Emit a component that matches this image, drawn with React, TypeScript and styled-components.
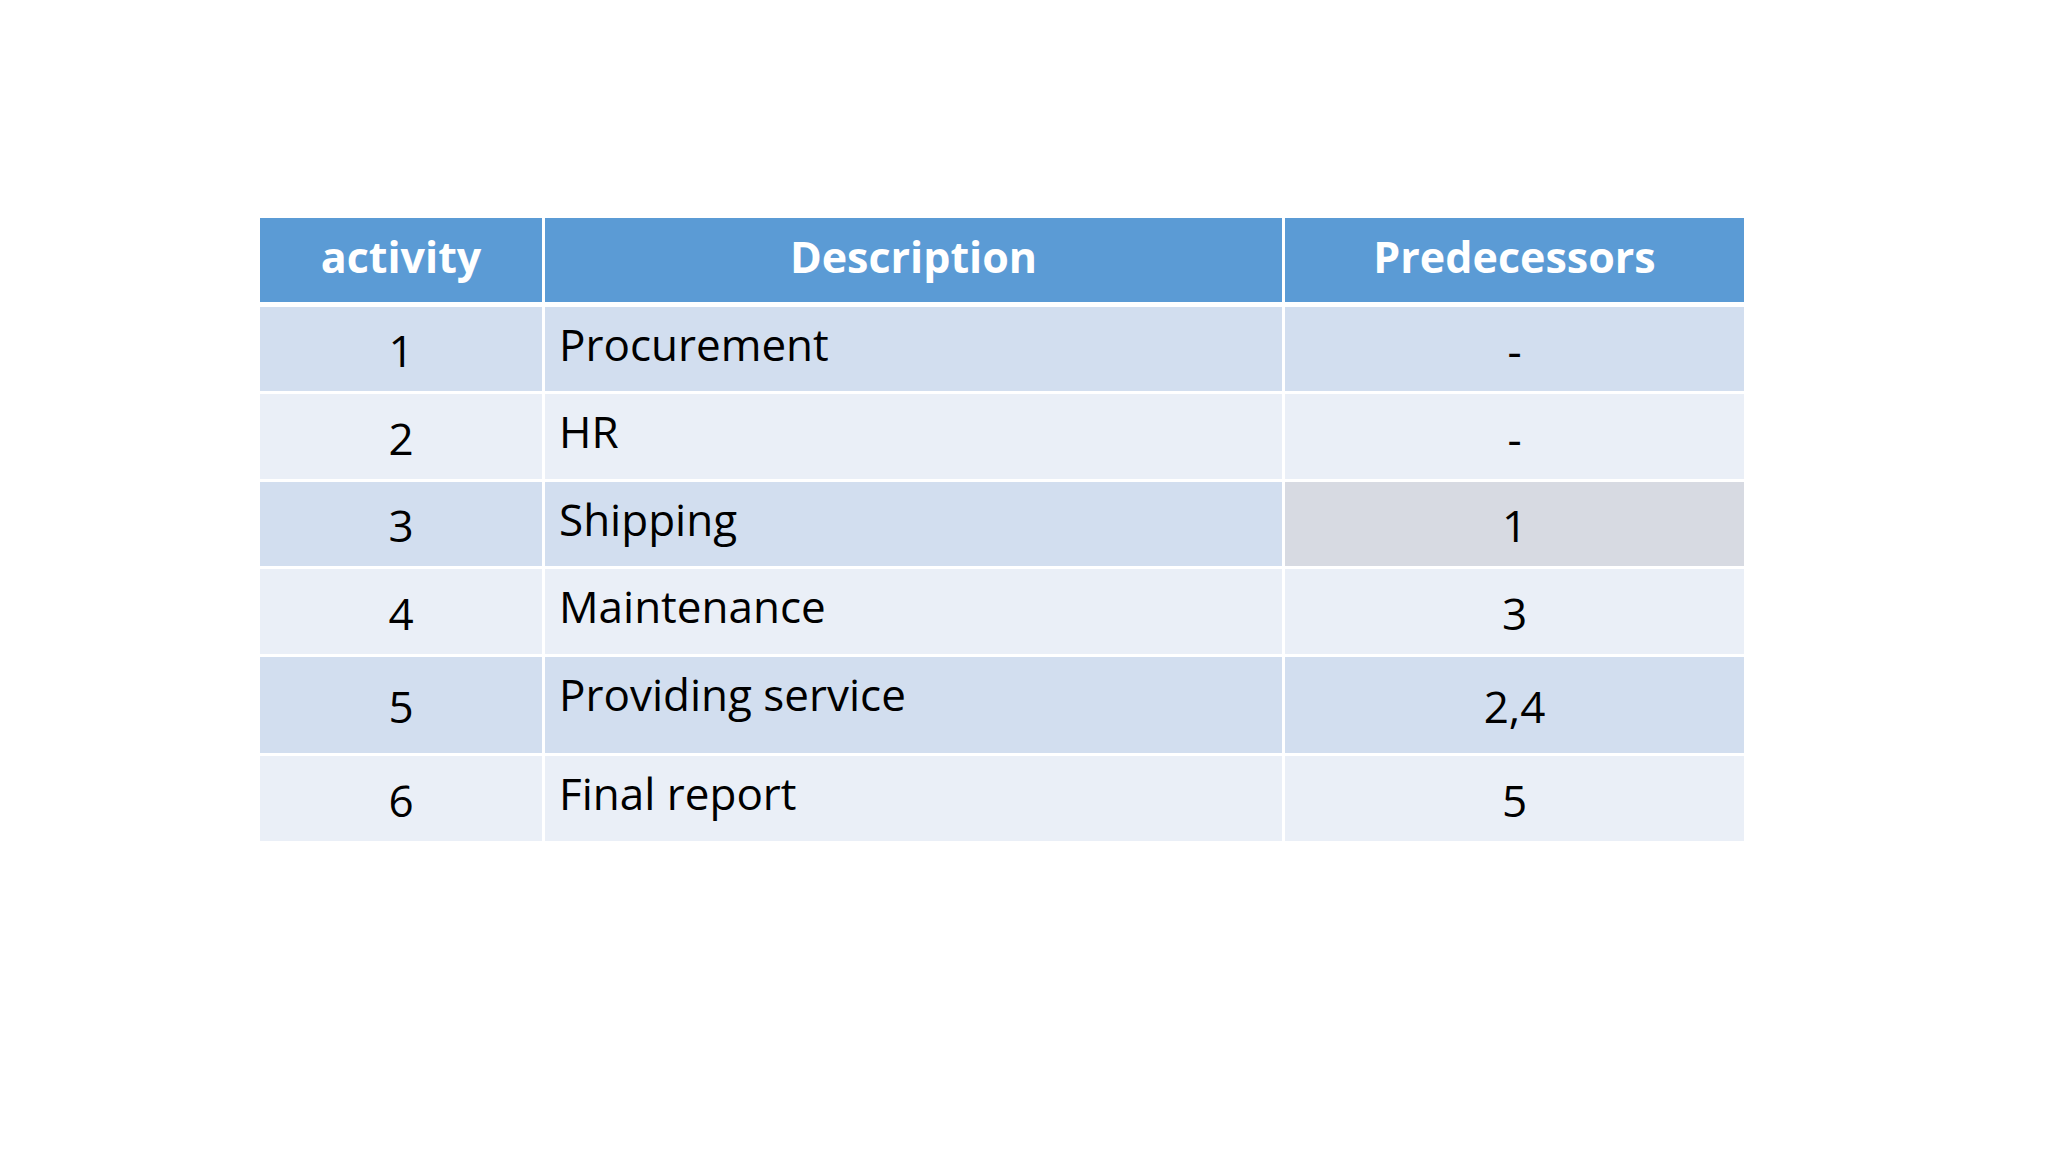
import styled, { createGlobalStyle } from "styled-components";

const GlobalStyle = createGlobalStyle`
  html, body {
    margin: 0;
    padding: 0;
    background: #ffffff;
  }
  body {
    font-family: "Open Sans", "Liberation Sans", sans-serif;
  }
`;

const Page = styled.main`
  width: 2048px;
  height: 1152px;
  box-sizing: border-box;
  padding: 218px 0 0 260px;
  background: #ffffff;
`;

const Table = styled.div`
  display: flex;
  flex-direction: column;
  gap: 3px;
  width: 1484px;
`;

const Row = styled.div<{ $height?: number }>`
  display: grid;
  grid-template-columns: 282px 737px 459px;
  column-gap: 3px;
  height: ${(p) => p.$height ?? 84}px;
`;

const HeaderRow = styled(Row)`
  margin-bottom: 2px;
`;

const HeadCell = styled.div`
  display: flex;
  align-items: center;
  justify-content: center;
  background: #5b9bd5;
  color: #ffffff;
  font-weight: 700;
  font-size: 43px;
  line-height: 60px;
  padding-bottom: 6px;
  box-sizing: border-box;
`;

const Cell = styled.div<{ $shade: "dark" | "light" | "grey" }>`
  display: flex;
  box-sizing: border-box;
  background: ${(p) =>
    p.$shade === "dark" ? "#d2deef" : p.$shade === "grey" ? "#d7dae2" : "#eaeff7"};
  color: #000000;
  font-size: 44px;
  line-height: 60px;
`;

const NumCell = styled(Cell)`
  align-items: center;
  justify-content: center;
  padding-top: 2px;
`;

const TextCell = styled(Cell)`
  align-items: flex-start;
  padding: 7px 0 0 14px;
`;

type Activity = {
  id: string;
  desc: string;
  pred: string;
  height: number;
  predGrey?: boolean;
};

const rows: Activity[] = [
  { id: "1", desc: "Procurement", pred: "-", height: 84 },
  { id: "2", desc: "HR", pred: "-", height: 85 },
  { id: "3", desc: "Shipping", pred: "1", height: 84, predGrey: true },
  { id: "4", desc: "Maintenance", pred: "3", height: 85 },
  { id: "5", desc: "Providing service", pred: "2,4", height: 96 },
  { id: "6", desc: "Final report", pred: "5", height: 85 },
];

export default function App() {
  return (
    <>
      <GlobalStyle />
      <Page>
        <Table>
          <HeaderRow>
            <HeadCell>activity</HeadCell>
            <HeadCell>Description</HeadCell>
            <HeadCell>Predecessors</HeadCell>
          </HeaderRow>
          {rows.map((r, i) => {
            const shade = i % 2 === 0 ? "dark" : "light";
            return (
              <Row key={r.id} $height={r.height}>
                <NumCell $shade={shade}>{r.id}</NumCell>
                <TextCell $shade={shade}>{r.desc}</TextCell>
                <NumCell $shade={r.predGrey ? "grey" : shade}>{r.pred}</NumCell>
              </Row>
            );
          })}
        </Table>
      </Page>
    </>
  );
}
